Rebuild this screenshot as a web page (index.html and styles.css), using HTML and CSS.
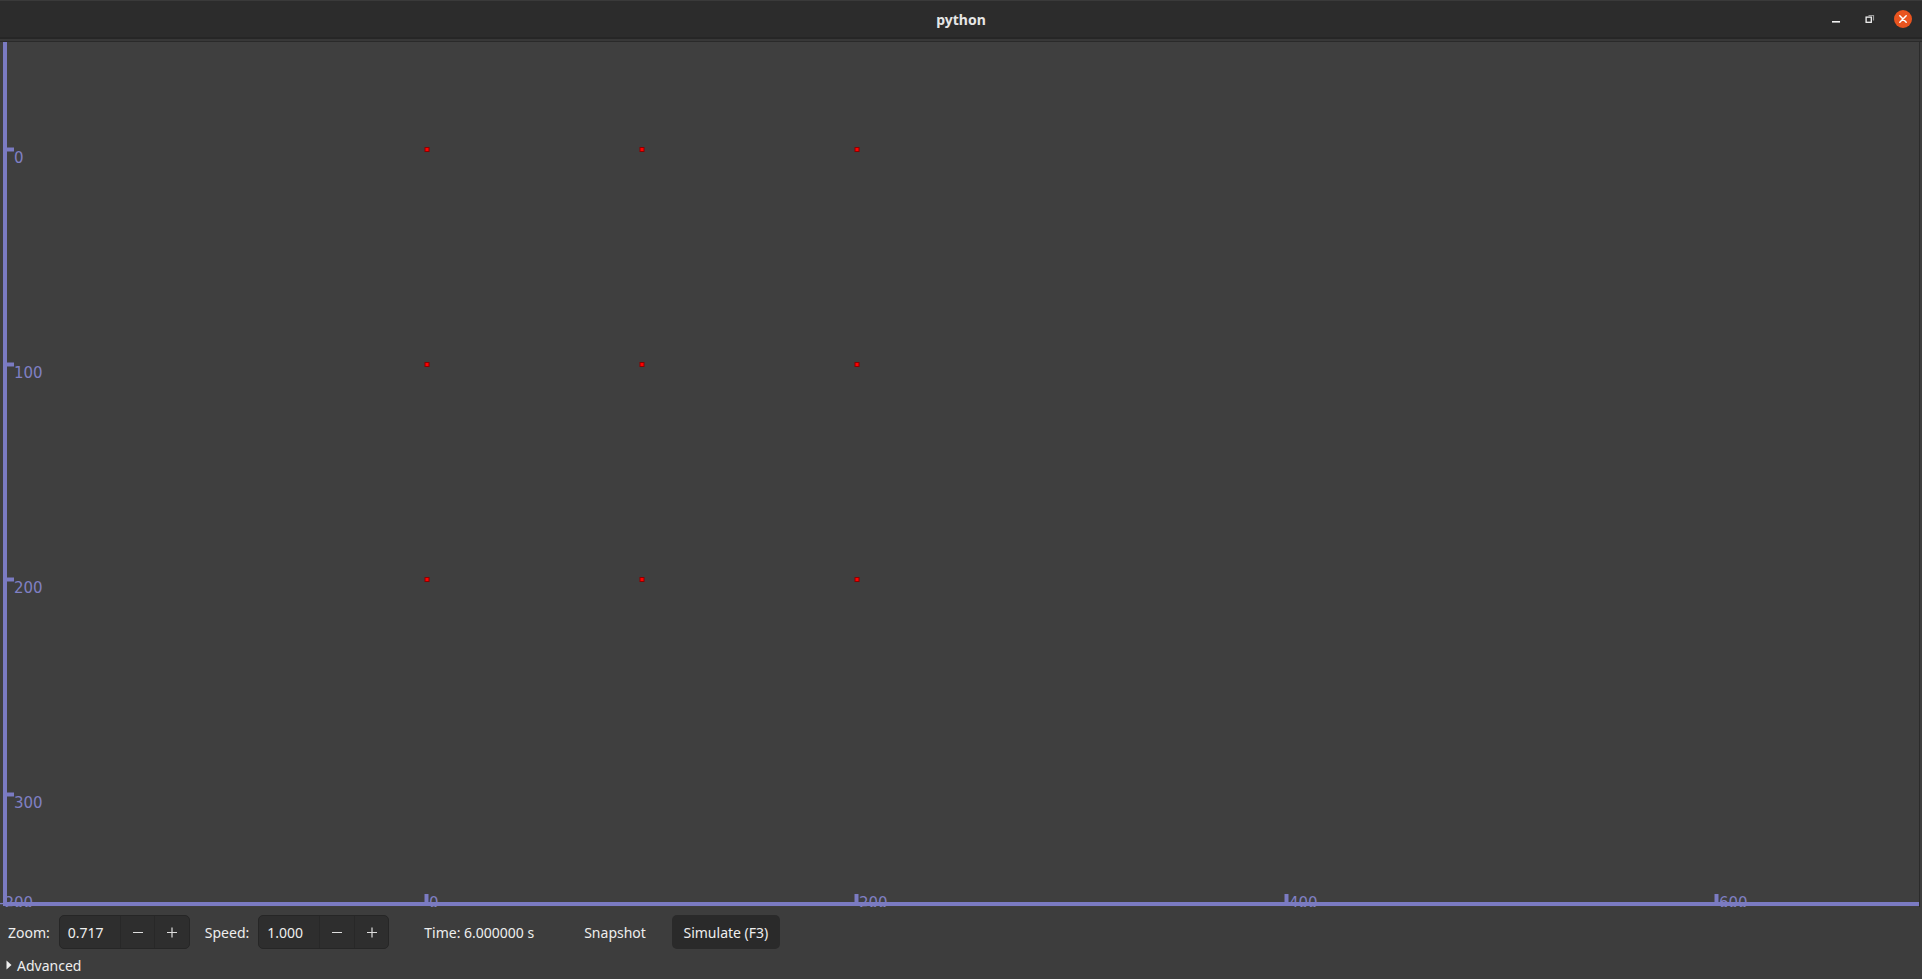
FILE: index.html
```html
<!DOCTYPE html>
<html lang="en">
<head>
<meta charset="utf-8">
<title>python</title>
<link rel="stylesheet" href="styles.css">
</head>
<body>
<div class="window">
  <header class="titlebar">
    <div class="title">python</div>
    <div class="wm-controls">
      <button class="wm-btn" aria-label="Minimize">
        <svg width="10" height="10" viewBox="0 0 10 10"><rect x="1" y="7" width="8" height="1.6" fill="#f2f2f2"/></svg>
      </button>
      <button class="wm-btn" aria-label="Restore">
        <svg width="10" height="10" viewBox="0 0 10 10"><path d="M3.5 1.5h5v5" fill="none" stroke="#9a9a9a" stroke-width="1.2"/><rect x="1.1" y="3.1" width="5.2" height="5.2" fill="none" stroke="#f2f2f2" stroke-width="1.3"/></svg>
      </button>
      <button class="wm-close" aria-label="Close">
        <svg width="18" height="18" viewBox="0 0 18 18"><circle cx="9" cy="9" r="9" fill="#e9541f"/><path d="M5.8 5.8l6.4 6.4M12.2 5.8l-6.4 6.4" stroke="#fff" stroke-width="1.5" stroke-linecap="round"/></svg>
      </button>
    </div>
  </header>
  <div class="titlebar-sep"></div>
  <main class="canvas">
    <svg class="plot" width="1919" height="865" viewBox="0 0 1919 865">
      <g class="labels" font-family="DejaVu Sans, sans-serif" font-size="15" fill="#8080c4">
        <text x="14" y="121">0</text>
        <text x="14" y="336">100</text>
        <text x="14" y="551">200</text>
        <text x="14" y="766">300</text>
        <text x="-1" y="866">-200</text>
        <text x="429" y="866">0</text>
        <text x="859" y="866">200</text>
        <text x="1289" y="866">400</text>
        <text x="1719" y="866">600</text>
      </g>
      <g class="axes" fill="#7b7bc2">
        <rect x="3" y="0" width="4" height="864"/>
        <rect x="3" y="860" width="1916" height="4"/>
        <rect x="7" y="105.5" width="7" height="4"/>
        <rect x="7" y="320.5" width="7" height="4"/>
        <rect x="7" y="535.5" width="7" height="4"/>
        <rect x="7" y="750.5" width="7" height="4"/>
        <rect x="424.5" y="852" width="4" height="8"/>
        <rect x="854.5" y="852" width="4" height="8"/>
        <rect x="1284.5" y="852" width="4" height="8"/>
        <rect x="1714.5" y="852" width="4" height="8"/>
      </g>
      <g class="points" fill="#ff0000" stroke="#8a0000" stroke-width="1">
        <rect x="425" y="105.5" width="4" height="4"/>
        <rect x="640" y="105.5" width="4" height="4"/>
        <rect x="855" y="105.5" width="4" height="4"/>
        <rect x="425" y="320.5" width="4" height="4"/>
        <rect x="640" y="320.5" width="4" height="4"/>
        <rect x="855" y="320.5" width="4" height="4"/>
        <rect x="425" y="535.5" width="4" height="4"/>
        <rect x="640" y="535.5" width="4" height="4"/>
        <rect x="855" y="535.5" width="4" height="4"/>
      </g>
    </svg>
  </main>
  <footer class="panel">
    <div class="controls">
      <span class="lbl lbl-zoom">Zoom:</span>
      <div class="spin">
        <span class="spin-entry">0.717</span>
        <span class="spin-btn" aria-label="Decrease"><svg width="12" height="12" viewBox="0 0 12 12"><path d="M1 6.5h10" stroke="#dedede" stroke-width="1.2"/></svg></span>
        <span class="spin-btn" aria-label="Increase"><svg width="12" height="12" viewBox="0 0 12 12"><path d="M1 6.5h10M6 1.5v10" stroke="#dedede" stroke-width="1.2"/></svg></span>
      </div>
      <span class="lbl lbl-speed">Speed:</span>
      <div class="spin">
        <span class="spin-entry">1.000</span>
        <span class="spin-btn" aria-label="Decrease"><svg width="12" height="12" viewBox="0 0 12 12"><path d="M1 6.5h10" stroke="#dedede" stroke-width="1.2"/></svg></span>
        <span class="spin-btn" aria-label="Increase"><svg width="12" height="12" viewBox="0 0 12 12"><path d="M1 6.5h10M6 1.5v10" stroke="#dedede" stroke-width="1.2"/></svg></span>
      </div>
      <span class="lbl lbl-time">Time: 6.000000 s</span>
      <button class="flat-btn">Snapshot</button>
      <button class="btn">Simulate (F3)</button>
    </div>
    <div class="advanced">
      <svg class="expander" width="6" height="10" viewBox="0 0 6 10"><path d="M0.5 0.5l5 4.5-5 4.5z" fill="#eeeeee"/></svg>
      <span>Advanced</span>
    </div>
  </footer>
</div>
</body>
</html>
```

FILE: styles.css
```css
* { box-sizing: border-box; }

html, body {
  margin: 0;
  padding: 0;
  background: #3d3d3d;
}

body {
  font-family: "Noto Sans", "DejaVu Sans", sans-serif;
  font-size: 14px;
  color: #eeeeee;
}

.window {
  width: 1922px;
  height: 979px;
  display: flex;
  flex-direction: column;
  background: #3d3d3d;
  overflow: hidden;
}

.titlebar {
  position: relative;
  height: 37px;
  flex: none;
  background: #2c2c2c;
  border-top: 1px solid #3a3a3a;
  display: flex;
  align-items: center;
  justify-content: center;
}

.title {
  font-weight: 700;
  font-size: 14px;
  color: #e6e6e6;
  margin-top: 0;
}

.wm-controls {
  position: absolute;
  right: 10px;
  top: 9px;
  display: flex;
  align-items: center;
  gap: 0;
}

.wm-btn, .wm-close {
  border: 0;
  padding: 0;
  background: transparent;
  display: flex;
  align-items: center;
  justify-content: center;
}

.wm-btn {
  width: 34px;
  height: 18px;
}

.wm-close {
  width: 18px;
  height: 18px;
  margin-left: 7px;
}

.titlebar-sep {
  height: 5px;
  flex: none;
  background: #383838;
  border-top: 2px solid #262626;
  border-bottom: 1px solid #2a2a2a;
}

.canvas {
  height: 865px;
  flex: none;
  width: 1920px;
  background: #3f3f3f;
  border-right: 1px solid #2b2b2b;
  overflow: hidden;
}

.plot {
  display: block;
}

.panel {
  flex: 1;
  padding: 8px 0 0 0;
}

.controls {
  height: 34px;
  display: flex;
  align-items: center;
}

.lbl {
  white-space: nowrap;
}

.lbl-zoom { margin-left: 8px; margin-right: 9px; }
.lbl-speed { margin-left: 15px; margin-right: 9px; }
.lbl-time { margin-left: 35px; }

.spin {
  height: 34px;
  width: 131px;
  display: flex;
  border: 1px solid #262626;
  border-radius: 5px;
  background: #2e2e2e;
  overflow: hidden;
}

.spin-entry {
  width: 61px;
  padding-left: 8px;
  display: flex;
  align-items: center;
}

.spin-btn {
  width: 35px;
  display: flex;
  align-items: center;
  justify-content: center;
  border-left: 1px solid #282828;
}

.flat-btn, .btn {
  font: inherit;
  color: #eeeeee;
  border: 0;
  height: 34px;
  padding: 0 10px;
  border-radius: 5px;
  background: transparent;
}

.flat-btn { margin-left: 40px; }

.btn {
  margin-left: 16px;
  width: 108px;
  background: #2a2a2a;
}

.advanced {
  margin-top: 6px;
  height: 20px;
  display: flex;
  align-items: center;
  padding-left: 6px;
}

.expander { margin-right: 5px; }
```
